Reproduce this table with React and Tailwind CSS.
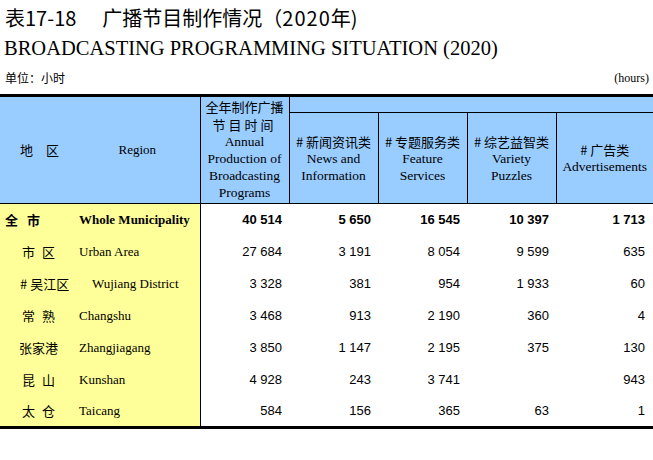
import React from "react";

const cjk = "font-['Noto_Sans_CJK_SC',sans-serif]";
const serif = "font-['Liberation_Serif','Noto_Sans_CJK_SC',serif]";
const arial = "font-['Liberation_Sans',sans-serif]";

const rows = [
  { zh: "全市", en: "Whole Municipality", zhPad: "pl-[5px]", track: "tracking-[9px]", enPad: "pl-[4px]", bold: true, v: ["40 514", "5 650", "16 545", "10 397", "1 713"] },
  { zh: "市区", en: "Urban Area", zhPad: "pl-[22px]", track: "tracking-[7px]", enPad: "pl-[4px]", v: ["27 684", "3 191", "8 054", "9 599", "635"] },
  { zh: "# 吴江区", en: "Wujiang District", zhPad: "pl-[20px]", track: "tracking-[0px]", enPad: "pl-[17px]", v: ["3 328", "381", "954", "1 933", "60"] },
  { zh: "常熟", en: "Changshu", zhPad: "pl-[22px]", track: "tracking-[7px]", enPad: "pl-[4px]", v: ["3 468", "913", "2 190", "360", "4"] },
  { zh: "张家港", en: "Zhangjiagang", zhPad: "pl-[19px]", track: "tracking-[0px]", enPad: "pl-[4px]", v: ["3 850", "1 147", "2 195", "375", "130"] },
  { zh: "昆山", en: "Kunshan", zhPad: "pl-[22px]", track: "tracking-[7px]", enPad: "pl-[4px]", v: ["4 928", "243", "3 741", "", "943"] },
  { zh: "太仓", en: "Taicang", zhPad: "pl-[22px]", track: "tracking-[7px]", enPad: "pl-[4px]", v: ["584", "156", "365", "63", "1"] },
];

const subHeads = [
  { zh: "# 新闻资讯类", en: ["News and", "Information"] },
  { zh: "# 专题服务类", en: ["Feature", "Services"] },
  { zh: "# 综艺益智类", en: ["Variety", "Puzzles"] },
  { zh: "# 广告类", en: ["Advertisements"] },
];

export default function App() {
  return (
    <div className="w-[653px] h-[460px] bg-white text-black overflow-hidden">
      {/* 标题 */}
      <div className="pt-[2px]">
        <div className={`h-[32px] leading-[32px] pl-[5px] text-[20px] ${cjk}`}>
          表17-18<span className="inline-block w-[26px]"></span>广播节目制作情况（<span className="tracking-[1px]">2020</span>年)
        </div>
        <div className={`h-[28px] leading-[28px] pl-[4px] text-[20.5px] ${serif}`}>
          BROADCASTING PROGRAMMING SITUATION (2020)
        </div>
        <div className="h-[32px] flex items-center justify-between pl-[5px] pr-[4px]">
          <span className={`text-[12px] ${cjk}`}>单位：小时</span>
          <span className={`text-[12px] ${serif}`}>(hours)</span>
        </div>
      </div>

      {/* 表格 */}
      <table className="w-[653px] table-fixed border-collapse border-t-[3px] border-b-[3px] border-black">
        <colgroup>
          <col className="w-[75px]" />
          <col className="w-[125px]" />
          <col className="w-[89px]" />
          <col className="w-[89px]" />
          <col className="w-[89px]" />
          <col className="w-[89px]" />
          <col className="w-[97px]" />
        </colgroup>
        <thead className="bg-[#99ccff]">
          <tr className="h-[17px]">
            <th rowSpan={2} className={`p-0 font-normal text-[13px] text-left pl-[20px] ${cjk}`}>
              <span className="tracking-[13px]">地区</span>
            </th>
            <th rowSpan={2} className={`p-0 font-normal text-[13px] border-r border-black ${serif}`}>
              Region
            </th>
            <th rowSpan={2} className="p-0 font-normal border-r border-black align-top">
              <div className={`text-[13px] leading-[18px] pt-[1px] ${cjk}`}>全年制作广播</div>
              <div className={`text-[13px] leading-[17px] tracking-[3px] ${cjk}`}>节目时间</div>
              <div className={`text-[13.5px] leading-[17px] ${serif}`}>Annual</div>
              <div className={`text-[13.5px] leading-[17px] ${serif}`}>Production of</div>
              <div className={`text-[13.5px] leading-[17px] ${serif}`}>Broadcasting</div>
              <div className={`text-[13.5px] leading-[17px] ${serif}`}>Programs</div>
            </th>
            <th colSpan={4} className="p-0 border-b border-black"></th>
          </tr>
          <tr className="h-[91px]">
            {subHeads.map((h, i) => (
              <th
                key={h.zh}
                className={`p-0 font-normal align-middle ${i < 3 ? "border-r border-black" : ""}`}
              >
                <div className={`text-[13px] leading-[17px] ${cjk}`}>{h.zh}</div>
                {h.en.map((t) => (
                  <div key={t} className={`text-[13.5px] leading-[17px] ${serif}`}>
                    {t}
                  </div>
                ))}
              </th>
            ))}
          </tr>
        </thead>
        <tbody className="border-t border-black">
          {rows.map((r) => (
            <tr key={r.en} className="h-[32px]">
              <td className={`p-0 bg-[#ffff99] text-[13px] ${r.zhPad} ${cjk} ${r.bold ? "font-bold" : ""}`}>
                <span className={r.track}>{r.zh}</span>
              </td>
              <td className={`p-0 bg-[#ffff99] border-r border-black text-[13px] ${r.enPad} ${serif} ${r.bold ? "font-bold" : ""}`}>
                {r.en}
              </td>
              {r.v.map((n, i) => (
                <td
                  key={i}
                  className={`p-0 text-right text-[13px] ${i === 4 ? "pr-[8px]" : "pr-[7px]"} ${arial} ${r.bold ? "font-bold" : ""}`}
                >
                  {n}
                </td>
              ))}
            </tr>
          ))}
        </tbody>
      </table>
    </div>
  );
}
